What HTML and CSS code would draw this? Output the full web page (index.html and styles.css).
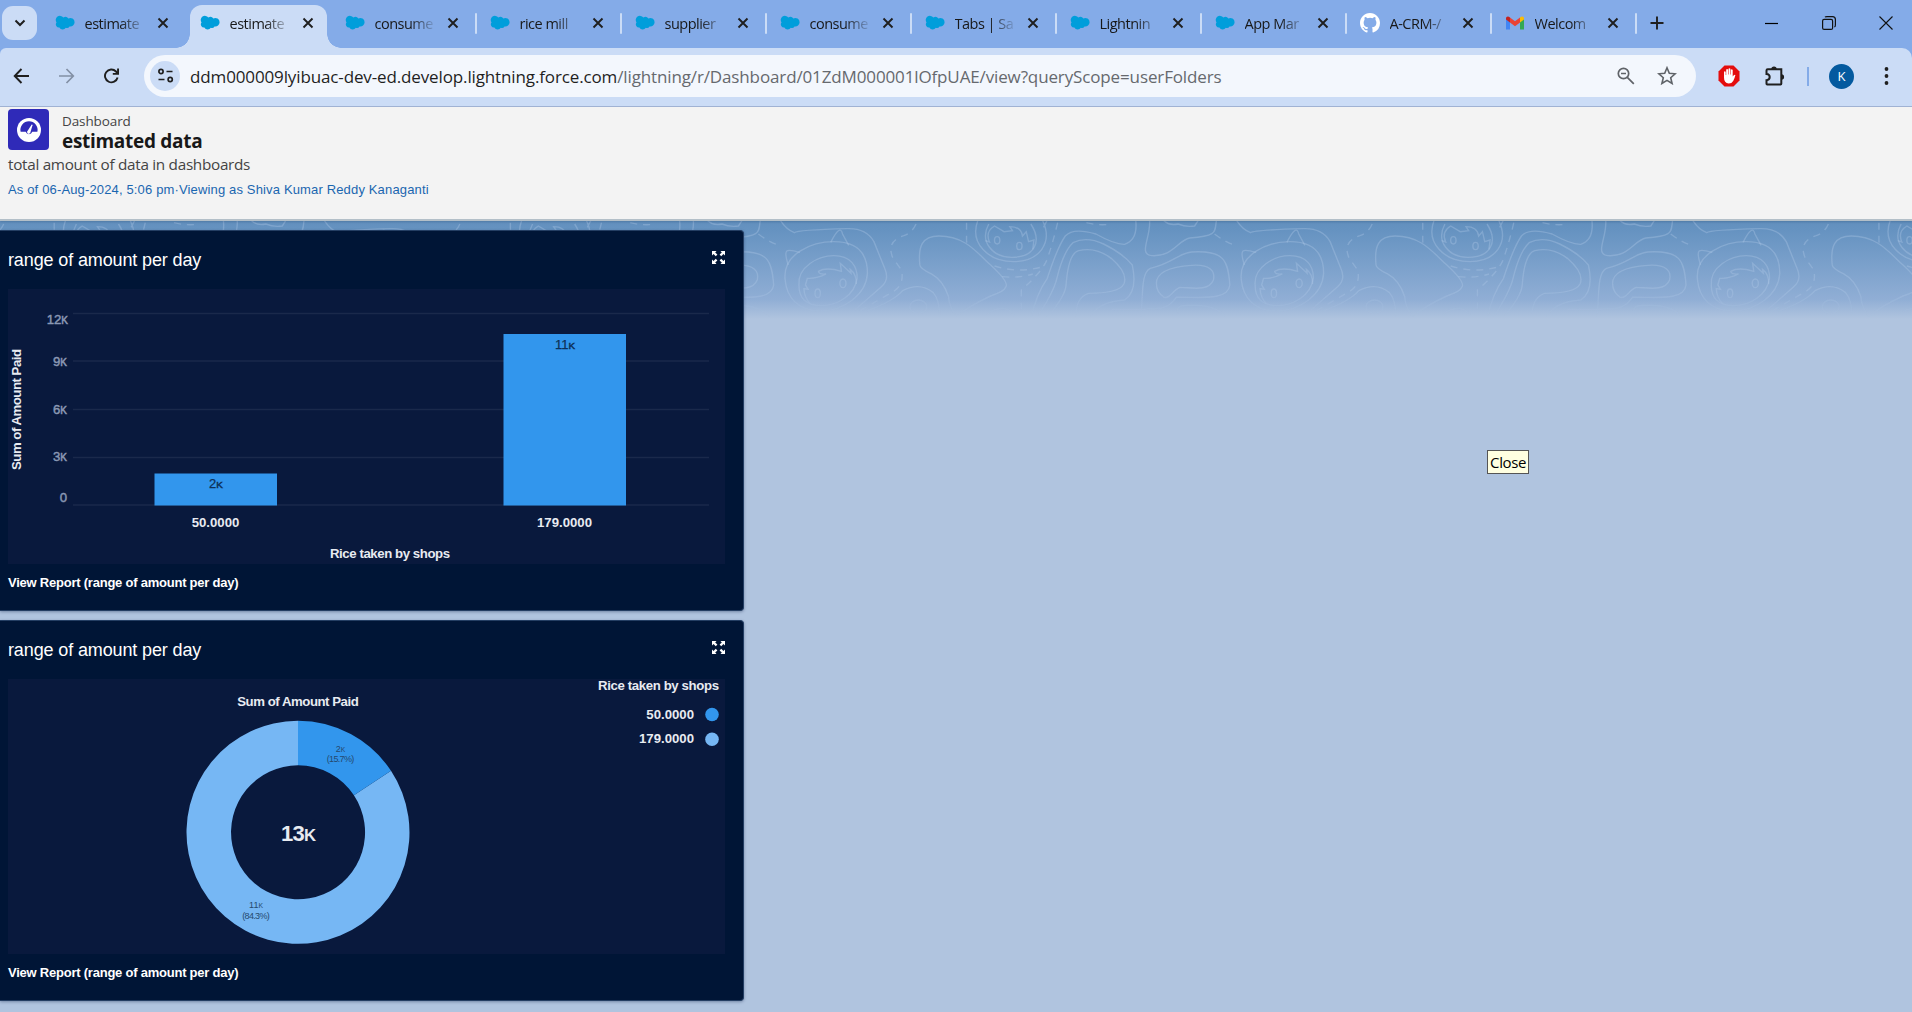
FILE: index.html
```html
<!DOCTYPE html>
<html lang="en">
<head>
<meta charset="utf-8">
<title>estimated data | Dashboard</title>
<link rel="stylesheet" href="styles.css">
</head>
<body>
<svg class="defs" width="0" height="0" aria-hidden="true">
  <symbol id="cloud" viewBox="0 0 20 14"><path fill="#009edb" d="M8.3 1.6A3.6 3.6 0 0 1 13.4 2.400A4.300 4.300 0 0 1 19.600 6.300A4.200 4.200 0 0 1 14.500 10.400A3 3 0 0 1 10.800 11.800A3.700 3.700 0 0 1 4.400 11.500A3.200 3.200 0 0 1 1.500 6.400A3.900 3.900 0 0 1 8.300 1.600z"/></symbol>
  <symbol id="close" viewBox="0 0 12 12"><path d="M1.500 1.500l9 9M10.500 1.500l-9 9" fill="none" stroke="#1f1f1f" stroke-width="1.900"/></symbol>
  <symbol id="expand" viewBox="0 0 13 13"><path fill="#fff" d="M0 0h4.500L3.200 1.400 5.400 3.600 3.800 5.200 1.500 3 0 4.500zM13 0v4.500L11.500 3 9.200 5.200 7.600 3.600 9.800 1.400 8.500 0zM0 13V8.500L1.500 10 3.800 7.800 5.400 9.400 3.200 11.600 4.500 13zM13 13H8.500l1.300-1.400-2.200-2.200 1.600-1.600L11.500 10 13 8.500z"/></symbol>
</svg>

<header class="browser">
  <div class="tabstrip">
    <button class="tab-search"><svg width="12" height="8" viewBox="0 0 12 8"><path d="M1.500 1.500L6 6l4.500-4.500" fill="none" stroke="#1f1f1f" stroke-width="2"/></svg></button>
    <div class="tabs">
      <div class="tab"><svg class="fav"><use href="#cloud"/></svg><span>estimate</span><svg class="x"><use href="#close"/></svg></div>
      <div class="tab active"><svg class="fav"><use href="#cloud"/></svg><span>estimate</span><svg class="x"><use href="#close"/></svg></div>
      <div class="tab sep"><svg class="fav"><use href="#cloud"/></svg><span>consume</span><svg class="x"><use href="#close"/></svg></div>
      <div class="tab sep"><svg class="fav"><use href="#cloud"/></svg><span>rice mill</span><svg class="x"><use href="#close"/></svg></div>
      <div class="tab sep"><svg class="fav"><use href="#cloud"/></svg><span>supplier</span><svg class="x"><use href="#close"/></svg></div>
      <div class="tab sep"><svg class="fav"><use href="#cloud"/></svg><span>consume</span><svg class="x"><use href="#close"/></svg></div>
      <div class="tab sep"><svg class="fav"><use href="#cloud"/></svg><span>Tabs | Sa</span><svg class="x"><use href="#close"/></svg></div>
      <div class="tab sep"><svg class="fav"><use href="#cloud"/></svg><span>Lightnin</span><svg class="x"><use href="#close"/></svg></div>
      <div class="tab sep"><svg class="fav"><use href="#cloud"/></svg><span>App Mar</span><svg class="x"><use href="#close"/></svg></div>
      <div class="tab sep"><svg class="fav" viewBox="0 0 16 16"><path fill="#fff" d="M8 0C3.580 0 0 3.580 0 8c0 3.540 2.290 6.530 5.470 7.590.4.070.55-.17.55-.38 0-.19-.01-.82-.01-1.490-2.010.37-2.530-.49-2.690-.94-.09-.23-.48-.94-.82-1.130-.28-.15-.68-.52-.01-.53.63-.01 1.080.58 1.230.82.72 1.210 1.870.87 2.330.66.07-.52.28-.87.51-1.070-1.780-.2-3.640-.89-3.640-3.950 0-.87.31-1.590.82-2.150-.08-.2-.36-1.020.08-2.120 0 0 .67-.21 2.200.82a7.600 7.600 0 0 1 4 0c1.530-1.040 2.200-.82 2.200-.82.44 1.100.16 1.920.08 2.120.51.56.82 1.270.82 2.150 0 3.070-1.870 3.750-3.650 3.950.29.25.54.73.54 1.480 0 1.070-.01 1.930-.01 2.200 0 .21.15.46.55.38A8.010 8.010 0 0 0 16 8c0-4.420-3.580-8-8-8z"/></svg><span>A-CRM-/</span><svg class="x"><use href="#close"/></svg></div>
      <div class="tab sep"><svg class="fav" viewBox="0 0 20 20"><path fill="#4285f4" d="M1 5v11.500h4V9z"/><path fill="#34a853" d="M15 9v7.500h4V5z"/><path fill="#ea4335" d="M5 4.500L10 8.300l5-3.800v5L10 13.300 5 9.500z"/><path fill="#c5221f" d="M1 5.500C1 3.300 3.300 2.800 5 4.500v5L1 6.500z"/><path fill="#fbbc04" d="M19 5.500C19 3.300 16.700 2.800 15 4.500v5l4-3z"/></svg><span>Welcom</span><svg class="x"><use href="#close"/></svg></div>
    </div>
    <svg class="newtab" width="14" height="14" viewBox="0 0 14 14"><path d="M7 .5v13M.5 7h13" stroke="#1f1f1f" stroke-width="1.900"/></svg>
    <div class="window-controls">
      <svg width="14" height="14" viewBox="0 0 14 14"><path d="M0 7.500h13" stroke="#000" stroke-width="1.200"/></svg>
      <svg width="14" height="14" viewBox="0 0 14 14"><g fill="none" stroke="#111" stroke-width="1.200"><rect x=".6" y="3.400" width="10" height="10" rx="1.500"/><path d="M3 1.200Q3.500.600 5 .600h5.500Q13.400.600 13.400 3.500V9q0 1.600-1 2"/></g></svg>
      <svg width="14" height="14" viewBox="0 0 14 14"><path d="M.5.500l13 13m0-13l-13 13" stroke="#111" stroke-width="1.100"/></svg>
    </div>
  </div>

  <div class="toolbar">
    <nav class="nav">
      <svg width="17" height="16" viewBox="0 0 17 16"><path d="M16 8H2M8.500 1L1.700 8l6.800 7" fill="none" stroke="#1f1f1f" stroke-width="1.900"/></svg>
      <svg width="17" height="16" viewBox="0 0 17 16"><path d="M1 8h14M8.500 1l6.800 7-6.800 7" fill="none" stroke="#8390a5" stroke-width="1.700"/></svg>
      <svg width="17" height="16" viewBox="0 0 17 16"><path d="M14.600 9.500A6.400 6.400 0 1 1 13 3.500l2 2" fill="none" stroke="#1f1f1f" stroke-width="1.900"/><path d="M16 .5v6.300H9.800V4.900h4.300V.500z" fill="#1f1f1f"/></svg>
    </nav>
    <div class="omnibox">
      <span class="site"><svg width="17" height="15" viewBox="0 0 17 15"><g fill="none" stroke="#1f1f1f" stroke-width="1.700"><circle cx="4" cy="3.500" r="2.100"/><path d="M9.500 3.500h6M1.500 11.500h6"/><circle cx="13.200" cy="11.500" r="2.100"/></g></svg></span>
      <span class="url"><b>ddm000009lyibuac-dev-ed.develop.lightning.force.com</b><i>/lightning/r/Dashboard/01ZdM000001lOfpUAE/view?queryScope=userFolders</i></span>
      <svg class="mag" width="18" height="18" viewBox="0 0 18 18"><g fill="none" stroke="#5f6368" stroke-width="1.700"><circle cx="6.500" cy="6.500" r="5.200"/><path d="M10.300 10.300l6.500 6.500M4 6.500h5"/></g></svg>
      <svg class="star" width="20" height="19" viewBox="0 0 20 19"><path d="M10 1.800l2.300 5.500 5.900.5-4.500 3.900 1.400 5.800-5.100-3.100-5.100 3.100 1.400-5.800-4.500-3.900 5.900-.5z" fill="none" stroke="#5f6368" stroke-width="1.600"/></svg>
    </div>
    <div class="actions">
      <svg class="adblock" width="22" height="22" viewBox="0 0 22 22"><path fill="#e40d0d" d="M6.500.5h9l6 6v9l-6 6h-9l-6-6v-9z"/><path fill="#fff" d="M6 12.500V6.800q.8-1.100 1.700 0V10h.5V4.500q.9-1.100 1.800 0V9.500h.5V3.800q1-1.200 1.900 0v5.700h.5V4.800q.9-1 1.800.1v6.700q1.400-2.200 2.700-1.600-.6 2.900-2.200 6-1.500 2.500-4.500 2.500-4.700-.3-4.700-6z"/></svg>
      <svg class="puzzle" width="22" height="22" viewBox="0 0 22 22"><path d="M2.500 5.500q0-1.200 1.200-1.200h13.600v14.500q0 .7-.7.700H3.200q-.7 0-.7-.7v-3.600q3.200-.2 3.200-3.100T2.500 9z" fill="none" stroke="#1f1f1f" stroke-width="2"/><path fill="#1f1f1f" d="M7.300 4.200a2.700 2.700 0 0 1 5.400 0zM17.400 9.300a2.700 2.700 0 0 1 0 5.400z"/></svg>
      <span class="divider"></span>
      <span class="avatar">K</span>
      <svg class="dots" width="5" height="18" viewBox="0 0 5 18"><g fill="#1f1f1f"><circle cx="2.500" cy="2" r="1.900"/><circle cx="2.500" cy="9" r="1.900"/><circle cx="2.500" cy="16" r="1.900"/></g></svg>
    </div>
  </div>
</header>

<section class="dash-header">
  <div class="dash-title">
    <span class="dash-icon"><svg width="24" height="24" viewBox="0 0 24 24"><circle cx="12" cy="12" r="12" fill="#fff"/><path d="M3.600 13.800A8.600 8.600 0 1 1 20.400 13.800H15.300A3.500 3.500 0 0 1 8.700 13.800z" fill="#2f2ab8"/><path d="M10.200 13.500L14.700 6.600q.9-.3.800.7l-2.200 7.500q-1 1.700-2.500.8-1-.9-.6-2.100z" fill="#fff"/></svg></span>
    <div><p class="kind">Dashboard</p><h1>estimated data</h1></div>
  </div>
  <p class="desc">total amount of data in dashboards</p>
  <p class="asof">As of 06-Aug-2024, 5:06 pm·Viewing as Shiva Kumar Reddy Kanaganti</p>
</section>

<main class="canvas">
  <svg class="contours" width="1912" height="98" viewBox="0 221 1912 98" aria-hidden="true">
    <defs>
      <linearGradient id="sky" x1="0" x2="0" y1="0" y2="1"><stop offset="0" stop-color="#628fbd"/><stop offset=".1" stop-color="#6693c1"/><stop offset=".8" stop-color="#90aed5"/><stop offset="1" stop-color="#b0c4df"/></linearGradient>
      <linearGradient id="veil" x1="0" x2="0" y1="0" y2="1"><stop offset="0" stop-color="#fff"/><stop offset=".72" stop-color="#fff"/><stop offset=".98" stop-color="#000"/></linearGradient>
      <mask id="fade" maskUnits="userSpaceOnUse" x="0" y="221" width="1912" height="98"><rect y="221" width="1912" height="98" fill="url(#veil)"/></mask>
      <g id="tile">
        <g class="line">
          <path d="M105 30Q120 58 142 68 150 60 280 56 330 54 350 95L378 175Q392 210 368 232L300 300"/>
          <path d="M118 210C110 130 190 95 245 95 310 95 333 135 333 190 330 255 270 303 210 303 150 303 122 260 118 210z"/>
          <path d="M154 225C150 170 205 137 245 137 290 137 307 170 306 205 300 255 255 287 213 287 172 287 154 265 154 225z"/>
          <path d="M237 97Q262 40 268 72L284 106M126 165C112 115 120 115 157 127"/>
          <path d="M183 280Q168 262 167 236L178 238 171 225 176 205Q200 207 225 192 205 194 205 184 225 170 265 184L262 160 290 190 288 178Q305 193 304 222"/>
          <ellipse cx="203" cy="250" rx="7" ry="13"/><ellipse cx="269" cy="220" rx="8" ry="13"/>
          <path d="M470 165C465 110 475 78 520 78 590 78 620 130 655 165Q705 218 694 232 690 245 655 258 595 290 565 320 545 285 545 260 530 210 500 192 470 175 470 165z"/>
          <path d="M330 303Q400 275 425 242 470 215 505 248 522 270 522 325"/>
          <ellipse cx="466" cy="290" rx="22" ry="20"/>
          <path d="M622 30C598 100 650 155 715 155 780 155 820 100 790 30M650 42C625 95 660 142 710 142 770 142 790 95 760 42M803 30L793 52"/>
          <path d="M641 92L652 96Q640 65 665 48L690 65 712 62 705 50Q735 50 738 78L748 65 754 95 768 90 765 118"/>
          <ellipse cx="672" cy="91" rx="7" ry="11"/><ellipse cx="730" cy="108" rx="7" ry="11"/>
          <path d="M760 325Q775 250 803 205 830 110 850 78 870 52 930 72 980 104 1005 103 1040 90 1034 30"/>
          <path d="M775 325Q820 245 828 205 845 125 870 98 905 78 950 102 1000 130 1025 165 1040 245 1005 270 935 275 912 325"/>
          <path d="M800 325Q850 260 852 225 858 130 885 122 930 110 970 145 1015 190 1003 222 990 250 910 250 875 265 878 325"/>
          <path d="M1070 30C1075 80 1040 132 1075 137 1130 142 1145 90 1175 84 1250 78 1240 65 1245 30M1106 30Q1120 48 1145 42 1165 52 1188 48L1198 30"/>
          <path d="M1046 325C1055 270 1045 190 1072 175 1130 160 1145 130 1180 126 1265 120 1275 150 1280 225 1275 275 1195 260 1140 262 1120 295 1100 297 1065 297 1045 300 1010 298 970 298 945 315"/>
          <path d="M1088 220C1088 175 1155 168 1180 166 1230 162 1242 185 1237 210 1225 245 1180 233 1150 232 1130 240 1125 267 1108 262 1095 252 1088 240 1088 220z"/>
          <path d="M1145 310Q1135 285 1175 286 1250 284 1270 325M645 315Q660 295 690 295 720 305 715 325"/>
        </g>
        <g class="line dashed"><path d="M460 42Q450 68 428 77 380 95 400 145L422 180Q430 225 400 245L312 303"/><path d="M592 38V95L600 108M830 38Q815 110 800 155 785 190 735 240V315M665 168Q725 190 785 172M685 200Q730 205 765 192M905 38Q940 48 970 42M1240 72Q1270 98 1292 105"/></g>
      </g>
    </defs>
    <rect y="221" width="1912" height="98" fill="url(#sky)"/>
    <g mask="url(#fade)"><g transform="translate(740 210) scale(.3827 .3333)">
      <use href="#tile" x="-2384"/><use href="#tile" x="-1192"/><use href="#tile"/><use href="#tile" x="1192"/><use href="#tile" x="2384"/>
    </g></g>
  </svg>

  <article class="card">
    <div class="card-head"><h2>range of amount per day</h2><svg class="expand" width="13" height="13"><use href="#expand"/></svg></div>
    <svg class="chart" width="717" height="275" viewBox="8 289 717 275">
      <g class="grid"><path d="M73 313.500H709M73 361H709M73 409.500H709M73 457.500H709M73 505H709"/></g>
      <g class="ticks"><text x="68" y="323.500">12<tspan class="k">K</tspan></text><text x="67" y="366">9<tspan class="k">K</tspan></text><text x="67" y="413.500">6<tspan class="k">K</tspan></text><text x="67" y="460.500">3<tspan class="k">K</tspan></text><text x="67" y="502">0</text></g>
      <rect class="bar" x="154.500" y="473.500" width="122.500" height="32"/><rect class="bar" x="503.500" y="334" width="122.500" height="171.500"/>
      <g class="values"><text x="216" y="488">2<tspan class="k">K</tspan></text><text x="565" y="348.500">11<tspan class="k">K</tspan></text></g>
      <g class="labels"><text x="215.500" y="527">50.0000</text><text x="564.500" y="527">179.0000</text><text x="390" y="557.500" textLength="120">Rice taken by shops</text><text transform="translate(21 409.500) rotate(-90)" textLength="121">Sum of Amount Paid</text></g>
    </svg>
    <a class="report">View Report (range of amount per day)</a>
  </article>

  <article class="card">
    <div class="card-head"><h2>range of amount per day</h2><svg class="expand" width="13" height="13"><use href="#expand"/></svg></div>
    <svg class="chart" width="717" height="275" viewBox="8 679 717 275">
      <path class="slice-b" d="M298 832.300m0-111.500a111.500 111.500 0 1 0 93 50L353.900 795.300A67 67 0 1 1 298 765.300z"/>
      <path class="slice-a" d="M298 720.800A111.500 111.500 0 0 1 391 770.800L353.900 795.300A67 67 0 0 0 298 765.300z"/>
      <g class="labels"><text x="298" y="705.500" textLength="121.500">Sum of Amount Paid</text><text class="total" x="298.500" y="841" textLength="35">13<tspan class="k">K</tspan></text></g>
      <g class="small"><text x="340.500" y="751.500">2<tspan class="k">K</tspan></text><text x="340.500" y="761.500" textLength="27.500">(15.7%)</text><text x="256" y="907.500">11<tspan class="k">K</tspan></text><text x="256" y="918.500" textLength="27.500">(84.3%)</text></g>
      <g class="legend"><text x="719" y="690" textLength="121">Rice taken by shops</text><text x="694" y="719">50.0000</text><text x="694" y="743">179.0000</text></g>
      <circle class="slice-a" cx="712" cy="714.500" r="6.800"/><circle class="slice-b" cx="712" cy="739.300" r="6.800"/>
    </svg>
    <a class="report">View Report (range of amount per day)</a>
  </article>
  <span class="tooltip">Close</span>
</main>
</body>
</html>
```
FILE: styles.css
```css
* { box-sizing: border-box; }
body { margin: 0; width: 1912px; height: 1012px; overflow: hidden; display: flex; flex-direction: column; background: #b0c4df; font-family: "Open Sans", "Noto Sans", sans-serif; color: #181818; }
h1, h2, p { margin: 0; }
svg { display: block; flex: none; }
.defs { position: absolute; }

.browser { flex: none; background: #84abe8; }
.tabstrip { height: 48px; display: flex; align-items: center; padding-left: 2px; }
.tab-search { width: 35px; height: 34px; margin: -2px 4px 0 0; padding: 0; border: 0; border-radius: 11px; background: #cbdcf6; display: grid; place-items: center; }
.tabs { display: flex; height: 48px; }
.tab { width: 145px; display: flex; align-items: center; padding: 0 0 2px 13.500px; position: relative; }
.fav { width: 20px; height: 20px; margin-right: 10px; }
.tab span { width: 58px; white-space: nowrap; font-size: 14.500px; letter-spacing: -.5px; line-height: 24px; padding-top: 2px; -webkit-mask-image: linear-gradient(90deg, #000 60%, rgba(0,0,0,.15)); mask-image: linear-gradient(90deg, #000 60%, rgba(0,0,0,.15)); }
.x { width: 12px; height: 12px; margin-left: 14px; }
.sep::after { content: ""; position: absolute; right: -1px; top: 13px; width: 2px; height: 21px; background: #cbdcf6; border-radius: 1px; }
.active { z-index: 0; }
.active::before { content: ""; position: absolute; z-index: -1; left: 4px; right: 4px; top: 5px; bottom: 0; border-radius: 12px 12px 0 0; background: #cbdcf6; }
.active::after { content: ""; position: absolute; z-index: -1; left: -10px; right: -10px; bottom: 0; height: 14px; background: radial-gradient(circle at 0 0, transparent 13.500px, #cbdcf6 14px) left / 14px 14px no-repeat, radial-gradient(circle at 100% 0, transparent 13.500px, #cbdcf6 14px) right / 14px 14px no-repeat; }
.newtab { margin: -2px 0 0 14px; }
.window-controls { margin: -3px 19px 0 auto; display: flex; gap: 43px; }

.toolbar { height: 59px; display: flex; align-items: center; border-bottom: 1px solid #a2b5d5; border-radius: 6px 10px 0 0; background: #cbdcf6; padding-left: 13px; }
.nav { display: flex; gap: 28px; width: 131px; }
.omnibox { width: 1552px; height: 42px; margin-top: -3px; border-radius: 21px; background: #f3f7fd; display: flex; align-items: center; padding: 0 19px 0 6px; }
.nav, .actions { margin-top: -2px; }
.site { width: 30px; height: 30px; border-radius: 50%; background: #cbdcf6; display: grid; place-items: center; }
.url { margin-left: 10px; padding-top: 2px; font-size: 17px; line-height: 24px; white-space: nowrap; letter-spacing: -.13px; flex: 1; }
.url b { font-weight: 400; color: #1f1f1f; }
.url i { font-style: normal; color: #66696e; }
.star { margin-left: 22px; }
.actions { display: flex; align-items: center; }
.adblock { margin-left: 22px; }
.puzzle { margin-left: 24px; }
.divider { width: 2px; height: 19px; margin: 0 20px 0 21px; background: #84abe8; }
.avatar { width: 25px; height: 25px; border-radius: 50%; background: #045a9f; color: #fff; font-size: 13px; line-height: 25px; text-align: center; }
.dots { margin-left: 30px; }

.dash-header { flex: none; height: 114px; background: #f3f3f3; border-bottom: 2px solid #b3bfc8; padding: 2px 8px 0; position: relative; z-index: 1; box-shadow: 0 1px 2px rgba(0,30,70,.2); }
.dash-title { display: flex; gap: 14px; height: 41px; }
.dash-icon { width: 41px; height: 41px; border-radius: 4px; background: #2f2ab8; display: grid; place-items: center; }
.kind { font-size: 13.500px; line-height: 18px; margin: 3px 0 0 -1px; color: #444; letter-spacing: -.1px; }
h1 { font-size: 19px; line-height: 24px; margin: -1px 0 0 -1px; font-weight: 700; letter-spacing: -.3px; }
.desc { font-size: 15.300px; line-height: 22px; margin-top: 3px; color: #444; letter-spacing: -.3px; }
.asof { font: 13px/16px "Liberation Sans", Arial, sans-serif; margin-top: 7px; color: #1a66b0; white-space: nowrap; letter-spacing: .15px; }

.canvas { flex: 1; position: relative; padding-top: 9px; display: flex; flex-direction: column; gap: 9px; }
.contours { position: absolute; left: 0; top: 0; }
.line { fill: none; stroke: #afc8e6; stroke-opacity: .36; stroke-width: 1.400px; }
.line path, .line ellipse { vector-effect: non-scaling-stroke; }
.dashed { stroke-dasharray: 7 6; }
.card { position: relative; width: 744px; height: 381px; padding: 0 0 0 8px; background: #001536; border: 1px solid #243e63; border-width: 1px 1px 1px 0; border-radius: 0 4px 4px 0; box-shadow: 0 1px 3px rgba(0,20,60,.35); color: #fff; font-family: "Liberation Sans", Arial, sans-serif; }
.card-head { height: 58px; display: flex; justify-content: space-between; padding: 20px 18px 0 0; }
h2 { font-size: 18px; font-weight: 400; line-height: 20px; letter-spacing: -.13px; margin-top: -1px; }
.chart { background: #09193d; }
.report { display: block; font-size: 13px; font-weight: 700; line-height: 16px; margin-top: 11px; letter-spacing: -.23px; }
.k { font-size: .76em; stroke-width: .5px; }
.grid { stroke: #1a294b; stroke-width: 1.500px; }
.ticks { fill: #8a98b4; font-size: 13.200px; text-anchor: end; stroke: #8a98b4; stroke-width: .45px; }
.bar { fill: #3296ed; }
.values { fill: #0d3158; font-size: 13px; text-anchor: middle; stroke: #0d3158; stroke-width: .25px; }
.labels { fill: #e8ebf1; font-size: 13.200px; font-weight: 700; text-anchor: middle; }
.total { font-size: 22px; }
.small { fill: #25496e; font-size: 9px; text-anchor: middle; }
.legend { fill: #e8ebf1; font-size: 13.200px; font-weight: 700; text-anchor: end; }
.slice-a { fill: #3296ed; }
.slice-b { fill: #76b7f4; }
.tooltip { position: absolute; left: 1487px; top: 229px; width: 42px; height: 24px; border: 1px solid #555; background: #ffffe1; color: #000; font-size: 15px; line-height: 23px; text-align: center; letter-spacing: -.4px; }
```
